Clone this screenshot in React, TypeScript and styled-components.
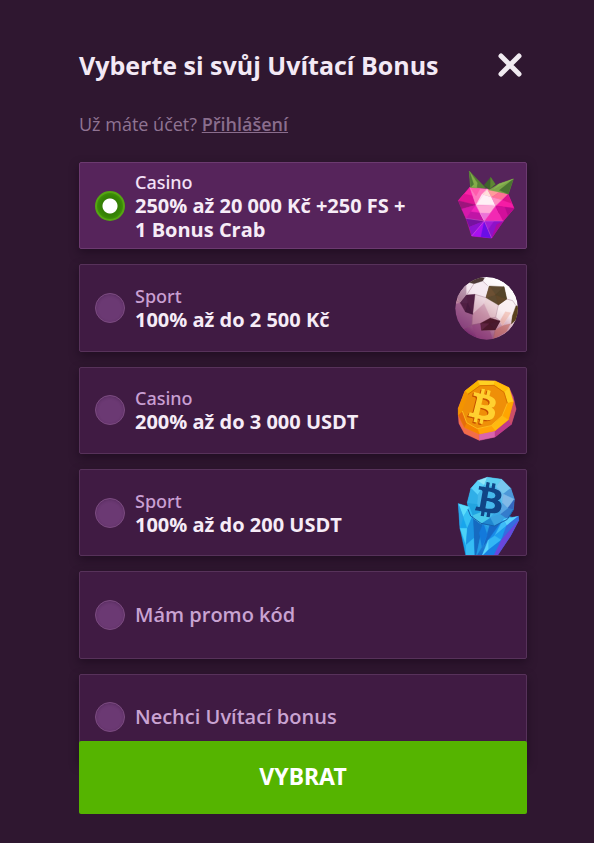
import React, { useState } from "react";
import styled, { createGlobalStyle } from "styled-components";
import { FaBtc } from "react-icons/fa";

const GlobalStyle = createGlobalStyle`
  *, *::before, *::after { box-sizing: border-box; }
  body {
    margin: 0;
    background: #2f1730;
    font-family: "Open Sans", "Noto Sans", sans-serif;
    color: #f3e9f5;
  }
`;

const Scroller = styled.div`
  height: 100vh;
  overflow-y: auto;
  scrollbar-width: none;
`;

const Dialog = styled.main`
  padding: 47px 67px 29px 79px;
`;

const Header = styled.header`
  display: flex;
  align-items: center;
  justify-content: space-between;
`;

const Title = styled.h1`
  margin: 0;
  font-size: 25px;
  line-height: 36px;
  font-weight: 700;
`;

const CloseButton = styled.button`
  display: flex;
  padding: 5px;
  border: 0;
  background: none;
  color: #f0eaf0;
  cursor: pointer;
`;

const SignIn = styled.p`
  margin: 29px 0 25px;
  font-size: 18px;
  line-height: 25px;
  font-weight: 400;
  color: #907493;
`;

const SignInLink = styled.a`
  color: #8a6d8d;
  font-weight: 600;
  text-decoration: underline;
`;

const Options = styled.div`
  display: grid;
  grid-auto-rows: 1fr;
  gap: 15px;
  min-height: 599px;
`;

const Option = styled.label<{ $selected: boolean }>`
  display: flex;
  align-items: center;
  gap: 10px;
  padding-left: 15px;
  border: 1px solid ${(p) => (p.$selected ? "#6c3a70" : "#57325a")};
  border-radius: 2px;
  background: ${(p) => (p.$selected ? "#56245b" : "#401b43")};
  box-shadow: 0 4px 10px rgba(20, 5, 22, 0.5);
  cursor: pointer;
`;

const Radio = styled.input`
  appearance: none;
  flex: none;
  width: 30px;
  height: 30px;
  margin: 0;
  border: 1px solid #7b4b80;
  border-radius: 50%;
  background: #6b3973;
  box-shadow: inset 0 1px 3px rgba(50, 20, 55, 0.3);

  &:checked {
    border: 2px solid #55a512;
    background: radial-gradient(circle, #fff 7px, #347d05 8px, #378605 11px, #3f9108 13px);
    box-shadow: none;
  }
`;

const OptionText = styled.span`
  flex: 1;
  display: flex;
  flex-direction: column;
  line-height: 24px;
`;

const Kind = styled.span<{ $selected: boolean }>`
  font-family: "Noto Sans", sans-serif;
  font-size: 18px;
  font-weight: 500;
  color: ${(p) => (p.$selected ? "#f3e0f6" : "#c99fd2")};
`;

const Offer = styled.span`
  font-size: 20px;
  font-weight: 700;
  color: #f6ecf7;
  white-space: pre-line;
`;

const Plain = styled.span`
  font-size: 20px;
  font-weight: 600;
  color: #c9a3d2;
`;

const Art = styled.svg`
  flex: none;
  width: 80px;
  height: 85px;
`;

const Submit = styled.button`
  position: sticky;
  bottom: 29px;
  display: block;
  width: 100%;
  height: 73px;
  margin-top: 15px;
  padding: 0 0 4px;
  border: 0;
  border-radius: 2px;
  background: #55b400;
  color: #fff;
  font-family: "Noto Sans", sans-serif;
  font-size: 23px;
  font-weight: 700;
  cursor: pointer;
`;

type Facet = [points: string, fill: string];

const Facets = ({ items }: { items: Facet[] }) => (
  <>
    {items.map(([points, fill]) => (
      <polygon key={points} points={points} fill={fill} stroke={fill} strokeWidth="1" />
    ))}
  </>
);

const Berry = () => (
  <Art viewBox="18 24 240 255" aria-hidden="true">
    <Facets
      items={[
        ["88,98 145,104 205,118 222,160 190,198 155,249 95,243 78,190 55,137", "#d3159f"],
        ["55,137 90,97 108,150", "#fa20a5"],
        ["55,137 72,117 98,122 108,150", "#e01395"],
        ["90,97 145,102 108,150", "#ff77be"],
        ["90,97 122,98 108,123", "#ff5aad"],
        ["126,118 142,102 155,127", "#ffe1da"],
        ["142,102 180,110 155,127", "#ff9b9b"],
        ["126,118 155,127 167,153 108,150", "#fff0f6"],
        ["155,127 180,110 203,118 187,135", "#ff7295"],
        ["155,127 187,135 167,153", "#ff8ec1"],
        ["203,118 222,160 167,153", "#f51ca5"],
        ["203,118 215,145 187,135", "#dc138b"],
        ["55,137 108,150 65,162", "#9e147d"],
        ["65,162 108,150 78,190", "#d519ab"],
        ["108,150 78,190 133,198", "#ef25bb"],
        ["92,170 120,174 133,198 78,190", "#c015a6"],
        ["108,150 167,153 133,198", "#ffabd9"],
        ["120,174 150,175 133,198", "#ec73d8"],
        ["167,153 133,198 190,198", "#f229b3"],
        ["167,153 195,157 178,176", "#b81182"],
        ["167,153 222,160 190,198", "#d20f9b"],
        ["195,157 222,160 204,181", "#b60b8d"],
        ["78,190 133,198 88,216", "#7512a0"],
        ["88,216 133,198 95,243", "#8c13d0"],
        ["133,198 95,243 155,249", "#a810f0"],
        ["133,198 123,245 155,249", "#6a0ee7"],
        ["133,198 190,198 155,249", "#8d13c8"],
        ["133,198 162,198 145,222", "#a31bd7"],
        ["190,198 155,249 170,209", "#ad0aa0"],
      ]}
    />
    <path d="M90 97l18 53 25 48 34-45 36-35M142 102l-34 48h59zM78 190l55 8 57 0M133 198l-38 45M133 198l22 51" fill="none" stroke="#ff9be2" strokeWidth="1.5" opacity=".6" />
    <Facets
      items={[
        ["88,48 138,100 92,97", "#577f34"],
        ["88,48 112,84 110,99 92,97", "#83ad4a"],
        ["88,48 101,88 92,97", "#4d7a35"],
        ["152,67 132,91 148,104 166,88", "#3e642b"],
        ["152,67 151,100 166,88", "#5e8534"],
        ["220,72 176,87 147,105 205,117", "#7ba548"],
        ["220,72 178,106 205,117", "#4a7431"],
        ["220,72 176,87 161,102", "#8ab552"],
      ]}
    />
  </Art>
);

const Football = () => (
  <Art viewBox="18 10 240 255" aria-hidden="true">
    <defs>
      <linearGradient id="ball" x1=".78" y1=".08" x2=".22" y2=".92">
        <stop offset="0" stopColor="#fff" />
        <stop offset=".4" stopColor="#f6e9ee" />
        <stop offset=".62" stopColor="#c692a6" />
        <stop offset="1" stopColor="#7a2c70" />
      </linearGradient>
      <clipPath id="ballClip">
        <circle cx="140" cy="140" r="94" />
      </clipPath>
    </defs>
    <g clipPath="url(#ballClip)">
      <circle cx="140" cy="140" r="94" fill="url(#ball)" />
      <g opacity=".6">
        <Facets
          items={[
            ["50,105 80,65 80,100 61,124", "#9a7090"],
            ["80,70 102,66 128,58 143,72 138,108 105,98 80,100", "#f3e7f0"],
            ["45,128 61,124 76,150 98,158 96,190 68,202 45,165", "#8c4a83"],
            ["105,98 138,108 132,126 98,158", "#e6cbd5"],
            ["132,126 138,108 175,130 166,168 151,169", "#e3c3c9"],
            ["98,158 132,126 151,169 122,185 96,190", "#c48aa3"],
            ["175,130 200,112 218,122 212,153 188,192 180,178 167,167", "#fbf0f0"],
            ["212,153 188,192 180,178 196,150", "#f0b4a4"],
            ["188,192 212,186 198,211 160,232 165,205", "#c0665c"],
            ["96,190 122,185 125,206 150,209 160,240 112,234", "#90407c"],
          ]}
        />
      </g>
      <Facets
        items={[
          ["148,73 192,75 200,112 175,130 138,108", "#5d4a30"],
          ["148,73 167,99 138,108", "#6c5033"],
          ["167,99 200,112 175,130", "#604729"],
          ["167,99 192,75 200,112", "#54452a"],
          ["85,62 110,44 133,50 128,58 102,66", "#4d3936"],
          ["80,100 105,98 98,158 76,150 61,124", "#501f43"],
          ["80,100 83,125 61,124", "#54254a"],
          ["83,125 98,158 76,150", "#451a3d"],
          ["122,185 151,169 180,178 165,205 125,206", "#4b182a"],
          ["122,185 147,186 125,206", "#5f2440"],
          ["147,186 180,178 165,205", "#4a1a2e"],
          ["228,132 240,135 238,165 214,187 217,163", "#59411d"],
        ]}
      />
      <path d="M143 72l-15-14M102 66l-22 34M105 98l33 10M200 112l18 5 10 15M175 130l-8 37 13 11M98 158l-2 32 26-5M151 169l16-2M96 190l-28 12M165 205l-5 27M61 124l-14-8" fill="none" stroke="#8a5b72" strokeWidth="2" opacity=".5" />
    </g>
  </Art>
);

const Coin = () => (
  <Art viewBox="18 9 240 255" aria-hidden="true">
    <Facets
      items={[
        ["55,130 75,78 114,47 165,48 207,68 220,95 228,132 214,178 165,216 118,226 73,205 57,175", "#cc4c87"],
        ["55,150 73,187 118,207 118,226 73,205 57,175", "#f26d49"],
        ["118,207 165,197 165,216 118,226", "#d965ae"],
        ["165,197 205,164 214,178 165,216", "#bf3a8c"],
        ["205,164 220,110 228,132 214,178", "#cc5068"],
        ["55,130 75,78 114,47 165,48 207,68 220,110 205,164 165,197 118,207 73,187 55,150", "#f79a00"],
        ["75,78 114,47 120,62 84,88", "#f9b600"],
        ["114,47 165,48 162,61 120,62", "#ffd023"],
        ["165,48 207,68 192,82 162,61", "#ffbe08"],
        ["207,68 220,110 202,115 192,82", "#ffcd1f"],
        ["220,110 205,164 187,152 202,115", "#ffa500"],
        ["205,164 165,197 153,182 187,152", "#ffb90f"],
        ["165,197 118,207 112,191 153,182", "#ffa208"],
        ["118,207 73,187 80,173 112,191", "#f58200"],
        ["73,187 55,150 67,138 80,173", "#e66c0a"],
        ["55,130 75,78 84,88 67,138 55,150", "#f39400"],
        ["84,88 120,62 162,61 192,82 202,115 187,152 153,182 112,191 80,173 67,138", "#ef8f08"],
      ]}
    />
    <path d="M84 88l36-26 42-1 30 21 10 33" fill="none" stroke="#d87500" strokeWidth="3" />
    <path d="M202 115l-15 37-34 30-41 9-32-18-13-35" fill="none" stroke="#ffcf27" strokeWidth="2" />
    <g transform="rotate(14 130 125)">
      <FaBtc x={76} y={77} size={104} color="#c55000" />
      <FaBtc x={79} y={73} size={104} color="#ffd030" />
    </g>
  </Art>
);

const Crystal = () => (
  <Art viewBox="18 10 240 255" aria-hidden="true">
    <defs>
      <linearGradient id="shard" x1="0" y1="0" x2="0" y2="1">
        <stop offset="0" stopColor="#36b7ef" />
        <stop offset="1" stopColor="#166bc9" />
      </linearGradient>
    </defs>
    <polygon points="88,145 215,150 160,270 80,270" fill="url(#shard)" />
    <Facets
      items={[
        ["98,148 130,170 108,270 88,270", "#166bc1"],
        ["130,170 150,190 132,230 108,270", "#239be5"],
        ["150,172 195,165 132,235", "#1768c7"],
        ["118,198 130,170 142,205 126,240", "#1379db"],
        ["93,65 113,42 142,32 185,38 212,65 223,98 220,128 202,158 163,177 122,171 91,148 82,108", "#3aa9e5"],
        ["93,65 113,42 133,55 113,85", "#5cd3fb"],
        ["113,42 142,32 133,55", "#8fe6f9"],
        ["133,55 168,60 187,109 150,153 120,137 111,112 113,85", "#45b9ec"],
        ["142,32 185,38 168,60 133,55", "#5ccdf0"],
        ["185,38 212,65 190,82 168,60", "#78c7ee"],
        ["168,60 190,82 187,109", "#6bbfee"],
        ["212,65 223,98 190,82", "#4d97d8"],
        ["190,82 223,98 203,125 187,109", "#82b9e7"],
        ["223,98 220,128 203,125", "#3464bd"],
        ["203,125 220,128 202,158 180,143", "#347ccc"],
        ["187,109 203,125 180,143", "#5aa5e2"],
        ["180,143 202,158 163,177 150,153", "#3ba3e0"],
        ["122,171 150,153 163,177", "#1f86d0"],
        ["91,148 120,137 150,153 122,171", "#49c8eb"],
        ["82,108 111,112 120,137 91,148", "#22a4e0"],
        ["82,108 93,65 113,85 111,112", "#30afe8"],
        ["55,111 88,121 98,148 103,270 78,270 60,185", "#18a5ec"],
        ["55,111 88,121 70,151", "#5adcfb"],
        ["70,151 88,121 98,148 82,185", "#37c1f4"],
        ["55,111 70,151 60,185", "#2aa5e8"],
        ["60,185 82,185 78,235", "#4bd2f8"],
        ["82,185 98,148 101,215 78,235", "#1c93e2"],
        ["78,235 101,215 103,270 78,270", "#36bdf5"],
        ["190,157 235,149 236,161 210,210 170,270 125,270 145,220", "#198ae8"],
        ["190,157 235,149 200,177", "#5bd2fb"],
        ["190,157 200,177 164,207", "#3fbdf8"],
        ["164,207 200,177 184,220", "#1c9cee"],
        ["145,220 164,207 184,220 145,250", "#33b6f5"],
        ["145,220 145,250 125,270", "#5ad4fc"],
        ["145,250 184,220 160,270 125,270", "#187fe3"],
        ["235,149 236,161 210,210 184,220 200,177", "#356de0"],
        ["236,161 210,210 170,270 160,270 184,220", "#6a46dc"],
      ]}
    />
    <path d="M84 128l8 20 31 22 40 8 39-20 18-29" fill="none" stroke="#155fac" strokeWidth="3" />
    <g transform="rotate(10 149 100)">
      <FaBtc x={97} y={48} size={104} color="#104586" />
    </g>
  </Art>
);

interface Bonus {
  id: string;
  kind?: string;
  text: string;
  Picture?: React.ComponentType;
}

const bonuses: Bonus[] = [
  { id: "casino-czk", kind: "Casino", text: "250% až 20 000 Kč +250 FS +\n1 Bonus Crab", Picture: Berry },
  { id: "sport-czk", kind: "Sport", text: "100% až do 2 500 Kč", Picture: Football },
  { id: "casino-usdt", kind: "Casino", text: "200% až do 3 000 USDT", Picture: Coin },
  { id: "sport-usdt", kind: "Sport", text: "100% až do 200 USDT", Picture: Crystal },
  { id: "promo", text: "Mám promo kód" },
  { id: "none", text: "Nechci Uvítací bonus" },
];

export default function App() {
  const [selected, setSelected] = useState("casino-czk");

  return (
    <Scroller>
      <GlobalStyle />
      <Dialog>
        <Header>
          <Title>Vyberte si svůj Uvítací Bonus</Title>
          <CloseButton type="button" aria-label="Zavřít">
            <svg width="24" height="24" viewBox="0 0 24 24" aria-hidden="true">
              <path d="M3 3l18 18M21 3L3 21" fill="none" stroke="currentColor" strokeWidth="5" strokeLinecap="round" />
            </svg>
          </CloseButton>
        </Header>
        <SignIn>
          Už máte účet? <SignInLink href="#login">Přihlášení</SignInLink>
        </SignIn>
        <Options role="radiogroup" aria-label="Uvítací bonus">
          {bonuses.map(({ id, kind, text, Picture }) => (
            <Option key={id} $selected={selected === id}>
              <Radio
                type="radio"
                name="bonus"
                value={id}
                checked={selected === id}
                onChange={() => setSelected(id)}
              />
              <OptionText>
                {kind && <Kind $selected={selected === id}>{kind}</Kind>}
                {kind ? <Offer>{text}</Offer> : <Plain>{text}</Plain>}
              </OptionText>
              {Picture && <Picture />}
            </Option>
          ))}
        </Options>
        <Submit type="button">VYBRAT</Submit>
      </Dialog>
    </Scroller>
  );
}
